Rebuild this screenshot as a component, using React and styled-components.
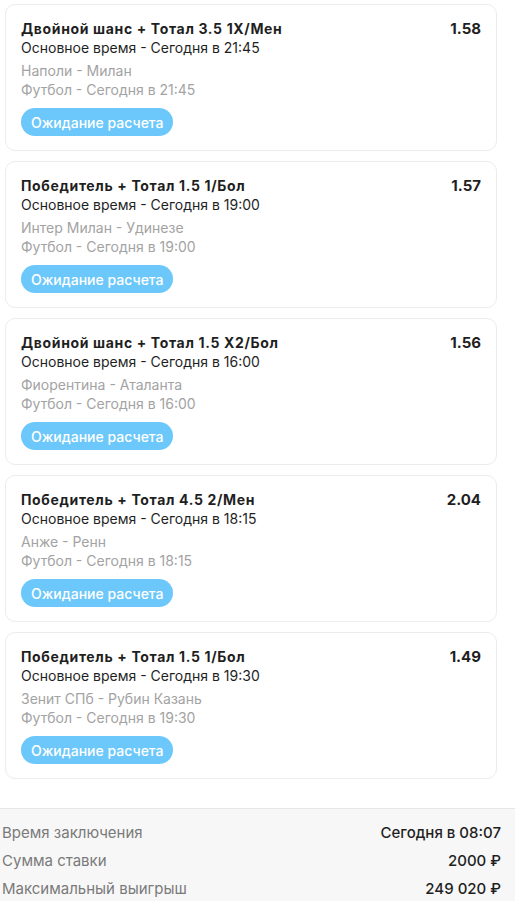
import React from 'react';
import styled, { createGlobalStyle } from 'styled-components';

const GlobalStyle = createGlobalStyle`
  html, body {
    margin: 0;
    padding: 0;
    background: #fff;
    font-family: Inter, "Noto Sans", sans-serif;
  }
`;

const Page = styled.div`
  width: 515px;
  display: flex;
  flex-direction: column;
`;

const List = styled.div`
  display: flex;
  flex-direction: column;
  gap: 10px;
  padding: 4px 18px 0 5px;
`;

const Card = styled.div`
  background: #fff;
  border: 1px solid #ececec;
  border-radius: 10px;
  padding: 14px 15px 14px 15px;
  display: flex;
  flex-direction: column;
`;

const TopRow = styled.div`
  display: flex;
  justify-content: space-between;
  align-items: flex-start;
`;

const Market = styled.div`
  font-size: 14px;
  font-weight: 700;
  letter-spacing: 0.65px;
  color: #1f1f1f;
  line-height: 19px;
`;

const Odds = styled.div`
  font-size: 15px;
  font-weight: 700;
  color: #1f1f1f;
  line-height: 19px;
`;

const Period = styled.div`
  font-size: 14px;
  color: #1f1f1f;
  line-height: 19px;
  margin-bottom: 4px;
`;

const Meta = styled.div`
  font-size: 14px;
  color: #a3a3a3;
  line-height: 19px;
`;

const Status = styled.span`
  align-self: flex-start;
  margin-top: 9px;
  height: 28px;
  padding: 0 10px;
  border-radius: 14px;
  background: #6cc8fa;
  color: #fff;
  font-size: 14px;
  font-weight: 500;
  display: flex;
  align-items: center;
`;

const Summary = styled.div`
  margin-top: 29px;
  border-top: 1px solid #e6e6e6;
  background: #f7f7f7;
  padding: 9px 14px 4px 2px;
  display: flex;
  flex-direction: column;
`;

const SummaryRow = styled.div`
  display: flex;
  justify-content: space-between;
  align-items: center;
  height: 28px;
  font-size: 15px;
`;

const Label = styled.span`
  color: #7a7a7a;
`;

const Value = styled.span`
  color: #1f1f1f;
  font-weight: 500;
`;

const bets = [
  { market: 'Двойной шанс + Тотал 3.5 1X/Мен', odds: '1.58', time: '21:45', teams: 'Наполи - Милан' },
  { market: 'Победитель + Тотал 1.5 1/Бол', odds: '1.57', time: '19:00', teams: 'Интер Милан - Удинезе' },
  { market: 'Двойной шанс + Тотал 1.5 X2/Бол', odds: '1.56', time: '16:00', teams: 'Фиорентина - Аталанта' },
  { market: 'Победитель + Тотал 4.5 2/Мен', odds: '2.04', time: '18:15', teams: 'Анже - Ренн' },
  { market: 'Победитель + Тотал 1.5 1/Бол', odds: '1.49', time: '19:30', teams: 'Зенит СПб - Рубин Казань' },
];

const summary = [
  ['Время заключения', 'Сегодня в 08:07'],
  ['Сумма ставки', '2000 ₽'],
  ['Максимальный выигрыш', '249 020 ₽'],
];

export default function App() {
  return (
    <Page>
      <GlobalStyle />
      <List>
        {bets.map((b, i) => (
          <Card key={i}>
            <TopRow>
              <Market>{b.market}</Market>
              <Odds>{b.odds}</Odds>
            </TopRow>
            <Period>Основное время - Сегодня в {b.time}</Period>
            <Meta>{b.teams}</Meta>
            <Meta>Футбол - Сегодня в {b.time}</Meta>
            <Status>Ожидание расчета</Status>
          </Card>
        ))}
      </List>
      <Summary>
        {summary.map(([l, v]) => (
          <SummaryRow key={l}>
            <Label>{l}</Label>
            <Value>{v}</Value>
          </SummaryRow>
        ))}
      </Summary>
    </Page>
  );
}
